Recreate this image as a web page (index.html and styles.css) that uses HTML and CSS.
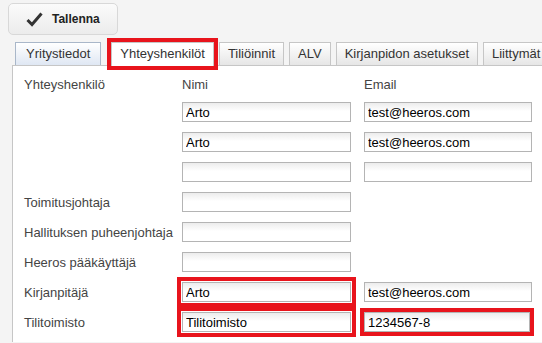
FILE: index.html
```html
<!DOCTYPE html>
<html lang="fi">
<head>
  <meta charset="UTF-8" />
  <title>Yhteyshenkilöt</title>
  <link rel="stylesheet" href="styles.css">
</head>
<body>
  <div class="toolbar">
    <button class="save-btn">
      <svg width="17" height="15" viewBox="0 0 17 15"><path d="M1.5 8 L6 12.5 L15.5 1.5" fill="none" stroke="#333" stroke-width="3"/></svg>
      Tallenna
    </button>
  </div>

  <div class="tabs">
    <div class="tab hover">Yritystiedot</div>
    <div class="tab active marked">Yhteyshenkilöt</div>
    <div class="tab">Tiliöinnit</div>
    <div class="tab">ALV</div>
    <div class="tab">Kirjanpidon asetukset</div>
    <div class="tab">Liittymät</div>
  </div>

  <div class="panel">
    <div class="form">
      <div class="label head">Yhteyshenkilö</div>
      <div class="label head">Nimi</div>
      <div class="label head">Email</div>

      <div></div>
      <input class="field" value="Arto">
      <input class="field" value="test@heeros.com">

      <div></div>
      <input class="field" value="Arto">
      <input class="field" value="test@heeros.com">

      <div></div>
      <input class="field" value="">
      <input class="field" value="">

      <div class="label">Toimitusjohtaja</div>
      <input class="field" value="">
      <div></div>

      <div class="label">Hallituksen puheenjohtaja</div>
      <input class="field" value="">
      <div></div>

      <div class="label">Heeros pääkäyttäjä</div>
      <input class="field" value="">
      <div></div>

      <div class="label">Kirjanpitäjä</div>
      <input class="field marked" value="Arto">
      <input class="field" value="test@heeros.com">

      <div class="label">Tilitoimisto</div>
      <input class="field marked" value="Tilitoimisto">
      <input class="field marked email" value="1234567-8">
    </div>
  </div>
</body>
</html>
```

FILE: styles.css
```css
* {
  box-sizing: border-box;
}

body {
  margin: 0;
  background: #f4f4f4;
  font-family: 'Liberation Sans', Arial, sans-serif;
  font-size: 13px;
  color: #444;
  overflow: hidden;
}

.toolbar {
  padding: 3px 8px 0;
}

.save-btn {
  display: flex;
  align-items: center;
  gap: 9px;
  width: 110px;
  height: 32px;
  padding: 0 0 0 17px;
  border: 1px solid #d8d8d8;
  border-radius: 5px;
  background: linear-gradient(to bottom, #fbfbfb, #ececec);
  font-family: 'Liberation Sans', Arial, sans-serif;
  font-size: 12px;
  font-weight: bold;
  color: #222;
}

.tabs {
  display: flex;
  gap: 5px;
  margin: 7px 0 0 15px;
  height: 23px;
  position: relative;
  z-index: 1;
}

.tab {
  height: 23px;
  line-height: 21px;
  padding: 0 8px;
  border: 1px solid #c6c6c6;
  border-bottom: none;
  background: linear-gradient(to bottom, #ffffff, #e6e6e6);
  color: #333;
  font-size: 13px;
  white-space: nowrap;
}

.tab.hover {
  border-color: #a9b7c9;
  background: linear-gradient(to bottom, #ffffff, #dfe7f3);
  padding: 0 10px;
}

.tab.active {
  background: #fff;
  height: 24px;
  margin-left: 5px;
}

.tab.marked {
  outline: 4px solid #e8141c;
}

.panel {
  margin-left: 12px;
  background: #fff;
  border-left: 1px solid #c6c6c6;
  border-top: 1px solid #c6c6c6;
  height: 277px;
  padding: 6px 0 0 11px;
}

.form {
  display: grid;
  grid-template-columns: 145px 169px 168px;
  column-gap: 13px;
  grid-auto-rows: 20px;
  row-gap: 10px;
}

.label {
  display: flex;
  align-items: center;
  white-space: nowrap;
}

.label.head {
  padding-top: 4px;
}

.field {
  width: 100%;
  height: 20px;
  margin: 0;
  padding: 0 3px;
  border: 1px solid #b4b4b4;
  background: linear-gradient(to bottom, #ececec, #ffffff 45%);
  font-family: 'Liberation Sans', Arial, sans-serif;
  font-size: 13px;
  color: #000;
}

.field.marked {
  outline: 4px solid #e8141c;
  outline-offset: 1px;
}

.field.marked.email {
  outline-offset: 0;
  width: 166px;
}
```
